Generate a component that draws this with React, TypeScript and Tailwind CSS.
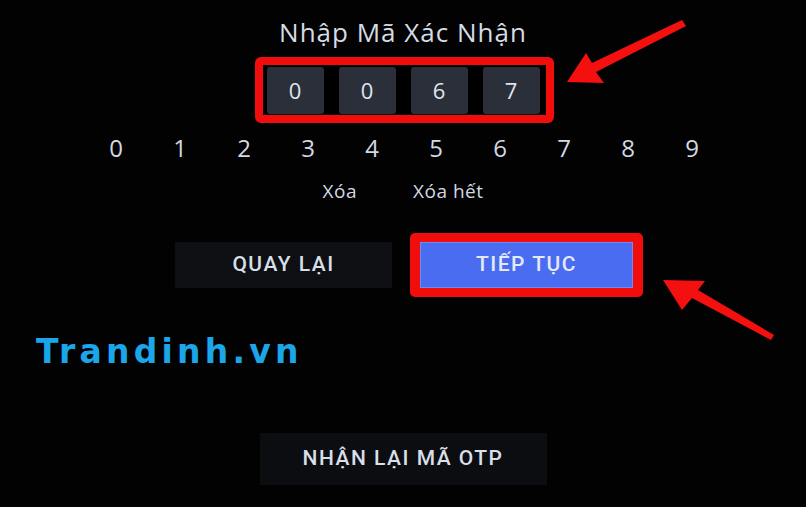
import React from "react";

const digits = ["0", "0", "6", "7"];
const keys = ["0", "1", "2", "3", "4", "5", "6", "7", "8", "9"];

const btnFont = { fontFamily: 'Roboto, "Open Sans", sans-serif' };

export default function App() {
  return (
    <div
      className="relative w-[806px] h-[507px] overflow-hidden bg-[#020202] flex flex-col items-center"
      style={{ fontFamily: '"Open Sans", "Noto Sans", sans-serif' }}
    >
      <div className="mt-[15px] text-[26px] leading-[34px] tracking-[1px] text-[#d5dce6]">
        Nhập Mã Xác Nhận
      </div>

      <div className="mt-[8px] ml-[2px] w-[299px] h-[66px] rounded-[6px] border-[8px] border-[#f20d0d] bg-black flex items-center pl-[4px] gap-[15px]">
        {digits.map((d, i) => (
          <div
            key={i}
            className="w-[57px] h-[47px] rounded-[3px] bg-[#2a2f3a] flex items-center justify-center text-[22px] text-[#dfe5ee]"
          >
            {d}
          </div>
        ))}
      </div>

      <div className="mt-[10px] grid grid-cols-10 w-[640px] ml-[2px] text-[24px] leading-[30px] text-[#d2d9e3]">
        {keys.map((k) => (
          <div key={k} className="text-center">
            {k}
          </div>
        ))}
      </div>

      <div className="mt-[15px] flex gap-[56px] text-[19px] leading-[26px] tracking-[0.5px] text-[#d2d9e3]">
        <span>Xóa</span>
        <span>Xóa hết</span>
      </div>

      <div className="mt-[29px] ml-[12px] flex items-center gap-[18px]">
        <div
          className="w-[217px] h-[46px] bg-[#0d0f13] flex items-center justify-center text-[21px] font-medium tracking-[1.5px] text-[#d8dfe9]"
          style={btnFont}
        >
          QUAY LẠI
        </div>
        <div className="w-[233px] h-[64px] rounded-[5px] bg-[#f20d0d] p-[9px_10px]">
          <div
            className="w-full h-full bg-[#4a6cf0] border border-[#6f8cf5] flex items-center justify-center text-[21px] font-medium tracking-[1.5px] text-[#e4e9f5]"
            style={btnFont}
          >
            TIẾP TỤC
          </div>
        </div>
      </div>

      <div
        className="self-start mt-[35px] ml-[36px] text-[33px] leading-[40px] font-bold tracking-[4.2px] text-[#1ba6ea]"
        style={{ fontFamily: '"DejaVu Sans", sans-serif' }}
      >
        Trandinh.vn
      </div>

      <div
        className="mt-[61px] w-[287px] h-[52px] bg-[#0b0d10] flex items-center justify-center text-[21px] font-medium tracking-[1.5px] text-[#d8dfe9]"
        style={btnFont}
      >
        NHẬN LẠI MÃ OTP
      </div>

      <svg className="absolute left-0 top-0" width="806" height="507" viewBox="0 0 806 507">
        <polygon
          points="567,82 586,53 592,63 682,20 686,26 596,72 604,83"
          fill="#f51010"
        />
        <polygon
          points="663,280 705,281 698,290 774,335 771,340 692,298 682,310"
          fill="#f51010"
        />
      </svg>
    </div>
  );
}
